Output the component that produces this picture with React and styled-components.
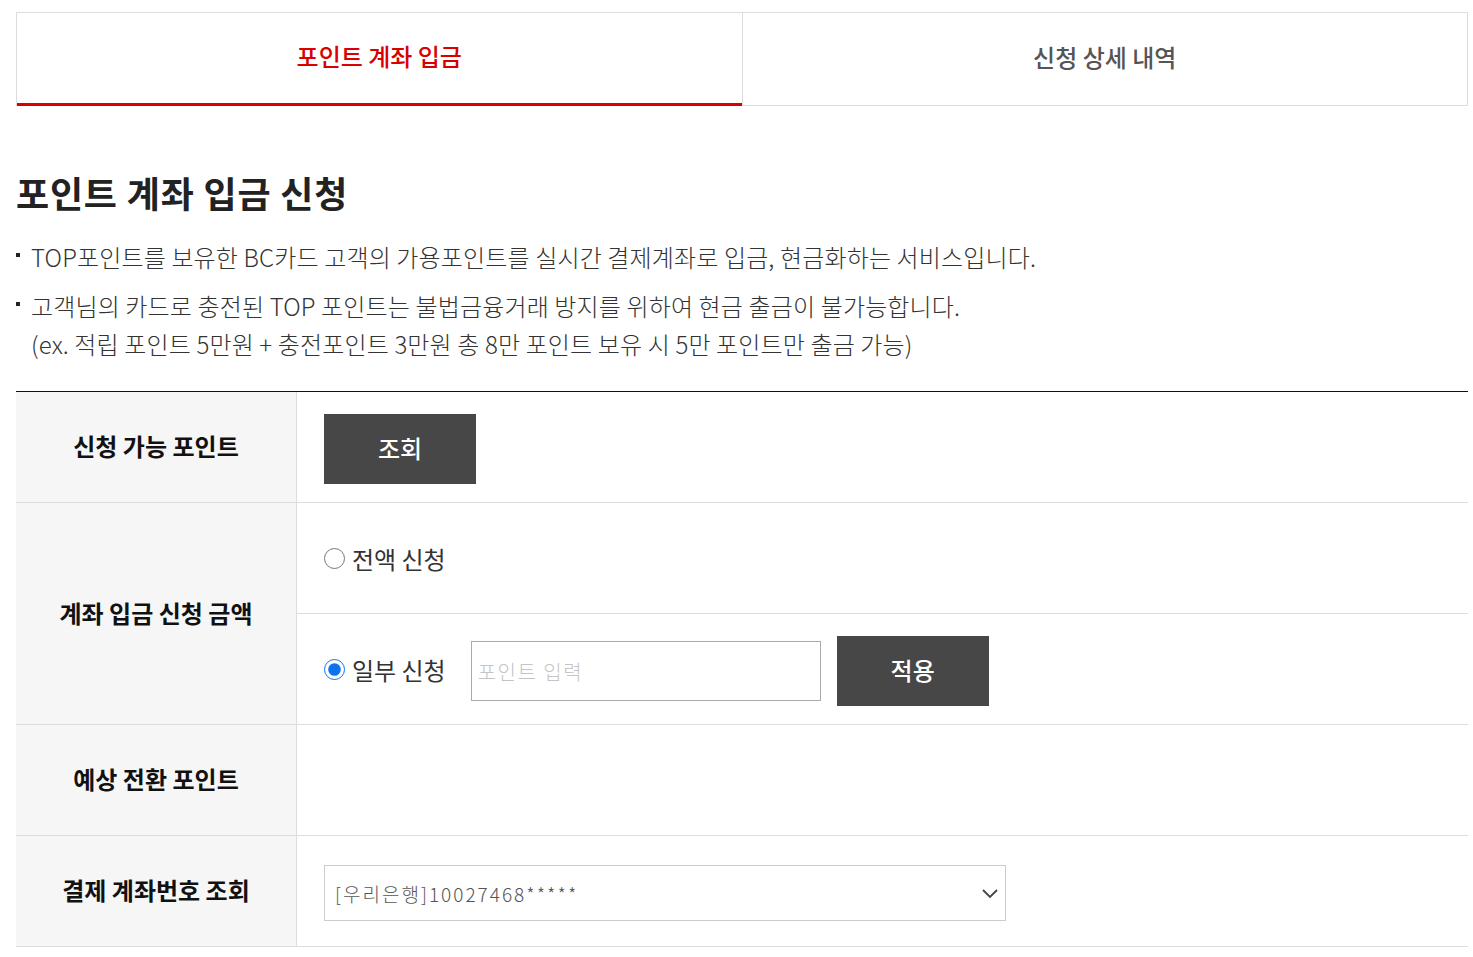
import React from 'react'
import styled, { createGlobalStyle } from 'styled-components'

const GlobalStyle = createGlobalStyle`
  body {
    margin: 0;
    background: #fff;
    font-family: "Noto Sans CJK KR", "Noto Sans", sans-serif;
    color: #333;
  }
`

const Page = styled.div`
  margin: 12px 5px 0 16px;
`

const Tabs = styled.div`
  display: flex;
  border: 1px solid #ddd;
  border-bottom: none;
`

const Tab = styled.div`
  flex: 1;
  height: 93px;
  box-sizing: border-box;
  padding-bottom: 5px;
  display: flex;
  align-items: center;
  justify-content: center;
  font-size: 24px;
  font-weight: 500;
  color: ${({ active }) => (active ? '#d90000' : '#555')};
  border-bottom: ${({ active }) => (active ? '3px solid #d90000' : '1px solid #ddd')};
  & + & {
    border-left: 1px solid #ddd;
  }
`

const Title = styled.h2`
  margin: 64px 0 0;
  font-size: 36px;
  font-weight: 700;
  letter-spacing: 0.8px;
  color: #222;
  line-height: 44px;
`

const Notes = styled.ul`
  list-style: none;
  margin: 24px 0 0;
  padding: 0;
`

const Note = styled.li`
  position: relative;
  padding-left: 15px;
  font-size: 24px;
  font-weight: 300;
  letter-spacing: 0.15px;
  line-height: 38px;
  color: #333;
  & + & {
    margin-top: 11px;
  }
  &::before {
    content: '';
    position: absolute;
    left: 0;
    top: 15px;
    width: 4px;
    height: 4px;
    background: #222;
  }
`

const Table = styled.div`
  margin-top: 28px;
  border-top: 1px solid #111;
  display: grid;
  grid-template-columns: 281px 1fr;
`

const Label = styled.div`
  grid-row: span ${({ span }) => span || 1};
  background: #f6f6f6;
  border-right: 1px solid #ddd;
  border-bottom: 1px solid #ddd;
  display: flex;
  align-items: center;
  justify-content: center;
  padding-bottom: 3px;
  font-size: 24px;
  font-weight: 700;
  color: #111;
`

const Cell = styled.div`
  height: 111px;
  box-sizing: border-box;
  border-bottom: 1px solid #ddd;
  display: flex;
  align-items: center;
  padding: 4px 0 0 27px;
  gap: ${({ gap }) => gap || 0}px;
`

const DarkButton = styled.button`
  width: 152px;
  height: 70px;
  padding: 0 0 4px;
  border: none;
  background: #474747;
  color: #fff;
  font-family: inherit;
  font-size: 24px;
  font-weight: 500;
  cursor: pointer;
`

const RadioLabel = styled.label`
  display: flex;
  align-items: center;
  gap: 7px;
  font-size: 24px;
  color: #333;
  margin-top: -3px;
`

const Radio = styled.input`
  width: 21px;
  height: 21px;
  margin: 0;
  accent-color: #0a74f0;
`

const PointInput = styled.input`
  width: 350px;
  height: 60px;
  box-sizing: border-box;
  border: 1px solid #aaa;
  padding: 0 6px;
  font-family: inherit;
  font-size: 20px;
  font-weight: 300;
  letter-spacing: 1.5px;
  outline: none;
  margin-left: 1px;
  margin-right: -8px;
  &::placeholder {
    color: #c4c4c4;
  }
`

const SelectBox = styled.div`
  width: 682px;
  height: 56px;
  box-sizing: border-box;
  border: 1px solid #ccc;
  display: flex;
  align-items: center;
  justify-content: space-between;
  padding: 0 6px 0 10px;
  font-size: 19px;
  font-weight: 300;
  letter-spacing: 2px;
  color: #555;
`

const Chevron = () => (
  <svg width="18" height="18" viewBox="0 0 18 18" fill="none">
    <path d="M2 6l7 7 7-7" stroke="#444" strokeWidth="1.8" />
  </svg>
)

export default function App() {
  return (
    <>
      <GlobalStyle />
      <Page>
        <Tabs>
          <Tab active>포인트 계좌 입금</Tab>
          <Tab>신청 상세 내역</Tab>
        </Tabs>

        <Title>포인트 계좌 입금 신청</Title>

        <Notes>
          <Note>TOP포인트를 보유한 BC카드 고객의 가용포인트를 실시간 결제계좌로 입금, 현금화하는 서비스입니다.</Note>
          <Note>
            고객님의 카드로 충전된 TOP 포인트는 불법금융거래 방지를 위하여 현금 출금이 불가능합니다.
            <br />
            (ex. 적립 포인트 5만원 + 충전포인트 3만원 총 8만 포인트 보유 시 5만 포인트만 출금 가능)
          </Note>
        </Notes>

        <Table>
          <Label>신청 가능 포인트</Label>
          <Cell>
            <DarkButton>조회</DarkButton>
          </Cell>

          <Label span={2}>계좌 입금 신청 금액</Label>
          <Cell>
            <RadioLabel>
              <Radio type="radio" name="amount" />
              전액 신청
            </RadioLabel>
          </Cell>
          <Cell gap={24}>
            <RadioLabel>
              <Radio type="radio" name="amount" defaultChecked />
              일부 신청
            </RadioLabel>
            <PointInput placeholder="포인트 입력" />
            <DarkButton>적용</DarkButton>
          </Cell>

          <Label>예상 전환 포인트</Label>
          <Cell />

          <Label>결제 계좌번호 조회</Label>
          <Cell>
            <SelectBox>
              <span>[우리은행]10027468*****</span>
              <Chevron />
            </SelectBox>
          </Cell>
        </Table>
      </Page>
    </>
  )
}
